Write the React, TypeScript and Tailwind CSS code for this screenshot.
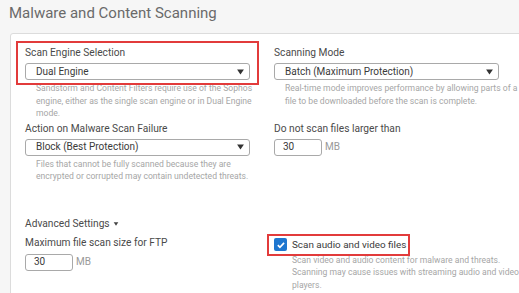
import React from "react";

function Caret({ className = "" }: { className?: string }) {
  return (
    <svg viewBox="0 0 8 7" className={className} aria-hidden>
      <path d="M0 0.5h8L4 6.5z" fill="currentColor" />
    </svg>
  );
}

function Select({ value }: { value: string }) {
  return (
    <div className="flex h-[17px] w-[225px] items-center justify-between rounded-[3px] border border-[#a9a9a9] bg-white pl-[10px] pr-[5px] text-[10px] text-[#3a3a3a]">
      <span className="leading-none">{value}</span>
      <Caret className="h-[6px] w-[7px] text-[#333]" />
    </div>
  );
}

function SizeInput({ value }: { value: string }) {
  return (
    <div className="flex items-center gap-[3px]">
      <div className="flex h-[17px] w-[48px] items-center rounded-[3px] border border-[#a9a9a9] bg-white pl-[8px] text-[10px] leading-none text-[#3a3a3a]">
        {value}
      </div>
      <span className="text-[10px] leading-none text-[#999]">MB</span>
    </div>
  );
}

function Help({ children }: { children: React.ReactNode }) {
  return <p className="mt-[2px] pl-[11px] text-[8.6px] leading-[12.5px] text-[#a6a6a6]">{children}</p>;
}

function Label({ children }: { children: React.ReactNode }) {
  return <div className="h-[14px] text-[10.2px] leading-[14px] text-[#4a4a4a]">{children}</div>;
}

export default function App() {
  return (
    <div className="h-[293px] w-[519px] overflow-hidden bg-[#f6f6f6] font-['Roboto',sans-serif]">
      <h1 className="mb-[10px] mt-[3px] h-[20px] pl-[9px] text-[15px] font-normal leading-[20px] text-[#6a6a6a]">
        Malware and Content Scanning
      </h1>

      <div className="ml-[10px] h-[300px] w-[530px] rounded-tl-[3px] border border-[#dcdcdc] bg-white pl-[14px] pt-[12px]">
        <div className="grid grid-cols-[249px_249px]">
          {/* row 1 */}
          <div>
            <div className="relative w-[225px]">
              <span className="pointer-events-none absolute -bottom-[5px] -left-[9px] -right-[9px] -top-[5px] border-2 border-[#e23b3b]" />
              <Label>Scan Engine Selection</Label>
              <div className="mt-[3px]">
                <Select value="Dual Engine" />
              </div>
            </div>
            <Help>
              Sandstorm and Content Filters require use of the Sophos
              <br />
              engine, either as the single scan engine or in Dual Engine
              <br />
              mode.
            </Help>
          </div>
          <div>
            <Label>Scanning Mode</Label>
            <div className="mt-[3px]">
              <Select value="Batch (Maximum Protection)" />
            </div>
            <Help>
              Real-time mode improves performance by allowing parts of a
              <br />
              file to be downloaded before the scan is complete.
            </Help>
          </div>

          {/* row 2 */}
          <div className="mt-[2px]">
            <Label>Action on Malware Scan Failure</Label>
            <div className="mt-[3px]">
              <Select value="Block (Best Protection)" />
            </div>
            <Help>
              Files that cannot be fully scanned because they are
              <br />
              encrypted or corrupted may contain undetected threats.
            </Help>
          </div>
          <div className="mt-[2px]">
            <Label>Do not scan files larger than</Label>
            <div className="mt-[3px]">
              <SizeInput value="30" />
            </div>
          </div>
        </div>

        <div className="mt-[34px] flex h-[14px] items-center gap-[3px] text-[10.2px] leading-[14px] text-[#4a4a4a]">
          <span>Advanced Settings</span>
          <Caret className="h-[4px] w-[6px] text-[#444]" />
        </div>

        <div className="mt-[5px] grid grid-cols-[249px_249px]">
          <div>
            <Label>Maximum file scan size for FTP</Label>
            <div className="mt-[4px]">
              <SizeInput value="30" />
            </div>
          </div>
          <div className="pt-[2px]">
            <div className="flex">
              <div className="relative flex h-[14px] items-center gap-[5px]">
                <span className="pointer-events-none absolute -bottom-[4px] -left-[7px] -right-[4px] -top-[4px] border-2 border-[#e23b3b]" />
                <span className="flex h-[13px] w-[13px] items-center justify-center rounded-[2px] bg-[#1e76cf]">
                  <svg viewBox="0 0 12 12" className="h-[10px] w-[10px]" aria-hidden>
                    <path d="M2.2 6.2l2.5 2.5 5-5.2" fill="none" stroke="white" strokeWidth="2" />
                  </svg>
                </span>
                <span className="text-[9.9px] leading-[14px] text-[#3a3a3a]">Scan audio and video files</span>
              </div>
            </div>
            <p className="mt-[2px] pl-[18px] text-[8.6px] leading-[12.5px] text-[#a6a6a6]">
              Scan video and audio content for malware and threats.
              <br />
              Scanning may cause issues with streaming audio and video
              <br />
              players.
            </p>
          </div>
        </div>
      </div>
    </div>
  );
}
